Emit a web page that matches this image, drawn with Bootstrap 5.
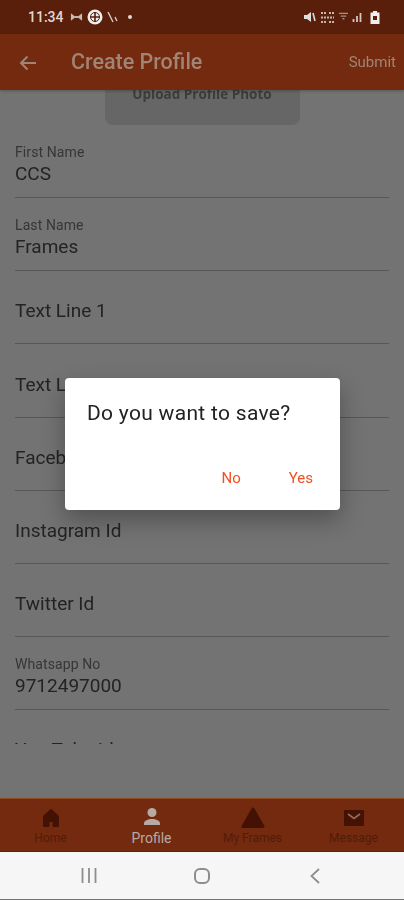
<!DOCTYPE html>
<html lang="en">
<head>
    <meta charset="UTF-8">
    <meta name="viewport" content="width=device-width, initial-scale=1.0">
    <title>Create Profile</title>
    <link rel="stylesheet" href="https://cdn.jsdelivr.net/npm/bootstrap@5.3.0/dist/css/bootstrap.min.css">
    <style>
        html, body { height: 900px; overflow: hidden; }
        body { font-family: Roboto, "Liberation Sans", sans-serif; background: #737373; }
        .phone { width: 404px; height: 900px; filter: blur(.35px); }
        .status-strip { height: 34px; background: #591f0b; color: #e2d8d2; font-size: 14px; padding: 0 24px 0 28px; }
        .status-time { font-weight: 500; margin-right: 6px; }
        .app-strip { height: 56px; padding-top: 1px; background: #732a0f; box-shadow: 0 1px 3px rgba(0,0,0,.25); z-index: 1; position: relative; }
        .back-btn { width: 71px; padding-left: 19px; }
        .app-title { font-size: 21.5px; font-weight: 500; color: #a18474; }
        .submit-txt { font-size: 15px; color: #a18474; padding-right: 8px; }
        .form-scroll { height: 654px; overflow: hidden; padding: 0 15px; color: #232323; }
        .photo-box { width: 195px; height: 35px; margin: 0 auto; background: #666; border-radius: 0 0 8px 8px; font-family: "Open Sans", sans-serif; font-weight: 700; font-size: 13.5px; color: #3c3c3c; line-height: 9px; text-align: center; }
        .field-row { height: 73.15px; border-bottom: 1px solid #575757; padding-bottom: 11px; }
        .field-plain { padding-bottom: 20px; }
        .field-small { font-size: 14px; line-height: 14px; margin-bottom: 3px; color: #363636; letter-spacing: .1px; }
        .field-value { font-size: 19px; line-height: 24px; }
        .spacer-strip { height: 54px; }
        .tabs-strip { height: 54px; background: #732a0f; border-top: 1px solid #8a4a20; border-bottom: 1px solid #7a1212; }
        .tab-item { width: 101px; font-size: 12px; line-height: 14px; color: #521c0a; padding-top: 7px; }
        .tab-item svg { display: block; height: 24px; margin-bottom: 1px; }
        .tab-active { color: #b5aaa4; font-size: 14px; }
        .sys-strip { height: 47px; background: #f6f6f6; }
        .sys-slot { width: 113px; }
        .sys-slot svg { display: block; }
        .dialog-box { position: absolute; left: 65px; top: 378px; width: 275px; height: 132px; background: #fff; border-radius: 4px; box-shadow: 0 10px 24px rgba(0,0,0,.3); padding: 23px 27px 0 22px; z-index: 5; }
        .dialog-text { font-size: 21px; line-height: 24px; color: #222; letter-spacing: .3px; }
        .dialog-btns { margin-top: 42px; gap: 48px; font-size: 15px; color: #f0501f; }
    </style>
</head>
<body>
    <div class="phone position-relative d-flex flex-column">
        <div class="status-strip d-flex align-items-center">
            <span class="status-time">11:34</span>
            <svg width="13" height="12" viewBox="0 0 14 12" class="me-1"><path d="M1 2l5 4-5 4zM13 2L8 6l5 4z" fill="#cbbdb5"/><rect x="5" y="5" width="4" height="2" fill="#cbbdb5"/></svg>
            <svg width="16" height="16" viewBox="0 0 16 16"><circle cx="8" cy="8" r="7.500" fill="#eee"/><path d="M8 3v10M3 8h10" stroke="#591f0b" stroke-width="1.600"/><circle cx="8" cy="8" r="4.500" fill="none" stroke="#591f0b" stroke-width="1"/></svg>
            <svg width="12" height="12" viewBox="0 0 12 12" class="ms-1"><path d="M1 1l5 10M8 6l2 4" stroke="#d8ccc6" stroke-width="1.400" fill="none"/></svg>
            <svg width="6" height="6" viewBox="0 0 6 6" class="ms-2"><circle cx="3" cy="3" r="2" fill="#e2d8d2"/></svg>
            <div class="ms-auto d-flex align-items-center">
                <svg width="12" height="12" viewBox="0 0 12 12" class="me-1"><path d="M0 4h3l4-3v10L3 8H0z" fill="#ddd"/><path d="M9 2l2 8" stroke="#ddd" stroke-width="1.500"/></svg>
                <svg width="15" height="13" viewBox="0 0 15 13" class="me-1"><path d="M1 2h6M9 2h5M1 6.500h13M1 11h6M9 11h5" stroke="#c4b5ad" stroke-width="1.800" stroke-dasharray="2 1"/></svg>
                <svg width="9" height="12" viewBox="0 0 10 12" class="me-1"><path d="M0 2h10M2 5h6M4 8h2" stroke="#a89287" stroke-width="1.600"/></svg>
                <svg width="10" height="10" viewBox="0 0 10 10" class="me-2"><path d="M1.500 10V7M5 10V4M8.500 10V1" stroke="#d2c6c0" stroke-width="1.800"/></svg>
                <svg width="10" height="13" viewBox="0 0 10 13"><path d="M3 0h4v1.500h2.500V13H.5V1.500H3z" fill="#eee"/><rect x="3" y="5" width="4" height="4" fill="#591f0b"/></svg>
            </div>
        </div>
        <div class="app-strip d-flex align-items-center">
            <div class="back-btn">
                <svg width="18" height="16" viewBox="0 0 18 16" class="d-block"><path d="M17 8H2M8.500 1.500L2 8l6.500 6.500" fill="none" stroke="#a18474" stroke-width="2"/></svg>
            </div>
            <div class="app-title">Create Profile</div>
            <div class="submit-txt ms-auto">Submit</div>
        </div>
        <div class="form-scroll">
            <div class="photo-box">Upload Profile Photo</div>
            <div class="field-row d-flex flex-column justify-content-end">
                <div class="field-small">First Name</div>
                <div class="field-value">CCS</div>
            </div>
            <div class="field-row d-flex flex-column justify-content-end">
                <div class="field-small">Last Name</div>
                <div class="field-value">Frames</div>
            </div>
            <div class="field-row field-plain d-flex flex-column justify-content-end"><div class="field-value">Text Line 1</div></div>
            <div class="field-row field-plain d-flex flex-column justify-content-end"><div class="field-value">Text Line 2</div></div>
            <div class="field-row field-plain d-flex flex-column justify-content-end"><div class="field-value">Facebook Id</div></div>
            <div class="field-row field-plain d-flex flex-column justify-content-end"><div class="field-value">Instagram Id</div></div>
            <div class="field-row field-plain d-flex flex-column justify-content-end"><div class="field-value">Twitter Id</div></div>
            <div class="field-row d-flex flex-column justify-content-end">
                <div class="field-small">Whatsapp No</div>
                <div class="field-value">9712497000</div>
            </div>
            <div class="field-row field-plain d-flex flex-column justify-content-end"><div class="field-value">You Tube Id</div></div>
        </div>
        <div class="spacer-strip"></div>
        <div class="tabs-strip d-flex">
            <div class="tab-item d-flex flex-column align-items-center">
                <svg width="22" height="24" viewBox="0 0 22 24"><path d="M11 4L4 10.500V20h4.500v-5h5v5H18v-9.500z" fill="#431205" stroke="#431205" stroke-width="2" stroke-linejoin="round"/></svg>
                Home
            </div>
            <div class="tab-item tab-active d-flex flex-column align-items-center">
                <svg width="22" height="24" viewBox="0 0 22 24"><circle cx="11" cy="6.500" r="4.500" fill="#b5aaa4"/><path d="M3 19v-1.500c0-3 4-4.500 8-4.500s8 1.500 8 4.500V19z" fill="#b5aaa4"/></svg>
                Profile
            </div>
            <div class="tab-item d-flex flex-column align-items-center">
                <svg width="26" height="24" viewBox="0 0 26 24"><path d="M13 3L3 20.500h20z" fill="#431205" stroke="#431205" stroke-width="3" stroke-linejoin="round"/></svg>
                My Frames
            </div>
            <div class="tab-item d-flex flex-column align-items-center">
                <svg width="22" height="24" viewBox="0 0 22 24"><rect x="1" y="4" width="20" height="16" rx="1" fill="#431205"/><path d="M5 8l6 4.500L17 8" fill="none" stroke="#9a6a55" stroke-width="1.600"/></svg>
                Message
            </div>
        </div>
        <div class="sys-strip d-flex align-items-center justify-content-center">
            <div class="sys-slot d-flex justify-content-center">
                <svg width="16" height="15" viewBox="0 0 16 15"><path d="M1.500 0v15M8 0v15M14.500 0v15" stroke="#8d8d8d" stroke-width="1.800"/></svg>
            </div>
            <div class="sys-slot d-flex justify-content-center">
                <svg width="16" height="16" viewBox="0 0 16 16"><rect x="1" y="1" width="14" height="14" rx="5" fill="none" stroke="#8d8d8d" stroke-width="2"/></svg>
            </div>
            <div class="sys-slot d-flex justify-content-center">
                <svg width="10" height="16" viewBox="0 0 10 16"><path d="M9 1L1.500 8 9 15" fill="none" stroke="#8d8d8d" stroke-width="1.800"/></svg>
            </div>
        </div>
        <div class="dialog-box">
            <div class="dialog-text">Do you want to save?</div>
            <div class="dialog-btns d-flex justify-content-end">
                <span>No</span>
                <span>Yes</span>
            </div>
        </div>
    </div>
    <script src="https://cdn.jsdelivr.net/npm/bootstrap@5.3.0/dist/js/bootstrap.bundle.min.js"></script>
</body>
</html>
